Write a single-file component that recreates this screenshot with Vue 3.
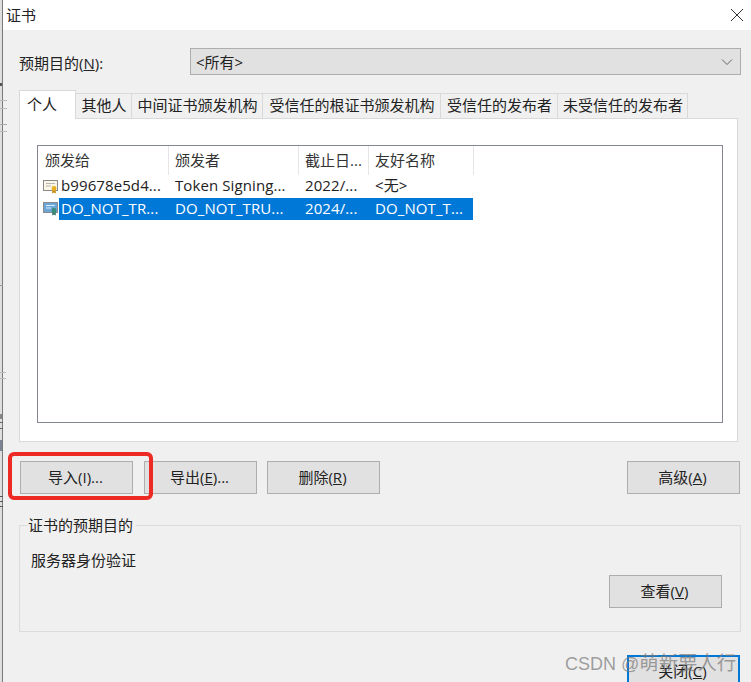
<script setup>
const tabs = ['个人', '其他人', '中间证书颁发机构', '受信任的根证书颁发机构', '受信任的发布者', '未受信任的发布者']
const tabWidths = [57, 56, 131, 178, 117, 130]
const cols = [
  { name: '颁发给', w: 131 },
  { name: '颁发者', w: 130 },
  { name: '截止日...', w: 70 },
  { name: '友好名称', w: 105 }
]
const rows = [
  { cells: ['b99678e5d4...', 'Token Signing...', '2022/...', '<无>'], selected: false },
  { cells: ['DO_NOT_TR...', 'DO_NOT_TRU...', '2024/...', 'DO_NOT_T...'], selected: true }
]
const marks = [
  { top: 83, h: 3, w: 2, c: '#555' },
  { top: 100, h: 1, w: 7, c: '#bbb' },
  { top: 108, h: 1, w: 7, c: '#bbb' },
  { top: 124, h: 1, w: 7, c: '#aaa' },
  { top: 131, h: 1, w: 7, c: '#bbb' },
  { top: 285, h: 1, w: 3, c: '#999' },
  { top: 372, h: 1, w: 6, c: '#bbb' },
  { top: 378, h: 1, w: 6, c: '#bbb' },
  { top: 414, h: 5, w: 2, c: '#888' },
  { top: 422, h: 1, w: 3, c: '#666' },
  { top: 428, h: 1, w: 3, c: '#666' },
  { top: 440, h: 11, w: 2, c: '#7a8494' },
  { top: 496, h: 1, w: 3, c: '#555' },
  { top: 501, h: 1, w: 3, c: '#555' },
  { top: 506, h: 1, w: 3, c: '#555' }
]
</script>

<template>
  <div class="root">
    <div class="edge"></div>
    <div class="win">
      <header class="title">
        <span>证书</span>
        <svg class="close-x" width="14" height="14" viewBox="0 0 14 14"><path d="M1 1l12 12M13 1L1 13" stroke="#333" stroke-width="1" fill="none" /></svg>
      </header>
      <main class="body">
        <div class="purpose">
          <label class="purpose-label">预期目的(<u>N</u>):</label>
          <div class="combo">
            <span>&lt;所有&gt;</span>
            <svg width="12" height="8" viewBox="0 0 12 8"><path d="M1 1.5l5 5 5-5" stroke="#666" stroke-width="1" fill="none" /></svg>
          </div>
        </div>

        <div class="tabs">
          <div v-for="(t, i) in tabs" :key="t" class="tab" :class="{ active: i === 0 }" :style="{ width: tabWidths[i] + 'px' }">{{ t }}</div>
        </div>
        <section class="panel">
          <div class="list">
            <div class="list-head">
              <div v-for="c in cols" :key="c.name" class="head-cell" :style="{ width: c.w + 'px' }">{{ c.name }}</div>
            </div>
            <div v-for="r in rows" :key="r.cells[0]" class="row">
              <svg class="cert" width="16" height="15" viewBox="0 0 16 15">
                <rect x="0.5" y="1.5" width="14" height="10" :fill="r.selected ? '#6aa7d8' : '#fbf6e6'" stroke="#8a8a8a" />
                <path d="M3 4.5h9M3 7h5" :stroke="r.selected ? '#dcecf8' : '#b5b5b5'" />
                <path d="M9.5 11l-.5 3.5 2-1 2 1-.5-3.5z" :fill="r.selected ? '#2f7a6a' : '#c98a12'" />
                <circle cx="11" cy="9.5" r="2.4" :fill="r.selected ? '#3c8f7c' : '#e8b020'" />
              </svg>
              <div class="cells" :class="{ selected: r.selected }">
                <div v-for="(v, i) in r.cells" :key="i" class="cell" :class="'c' + i">{{ v }}</div>
              </div>
            </div>
          </div>
        </section>

        <div class="actions">
          <button class="btn first">导入(I)...</button>
          <button class="btn second">导出(<u>E</u>)...</button>
          <button class="btn third">删除(<u>R</u>)</button>
          <button class="btn adv">高级(<u>A</u>)</button>
        </div>

        <fieldset class="group">
          <legend>证书的预期目的</legend>
          <div class="group-text">服务器身份验证</div>
          <div class="group-foot"><button class="btn">查看(<u>V</u>)</button></div>
        </fieldset>

        <div class="foot"><button class="btn default">关闭(<u>C</u>)</button></div>
      </main>
    </div>
    <i v-for="m in marks" :key="m.top" class="mark" :style="{ top: m.top + 'px', height: m.h + 'px', width: m.w + 'px', background: m.c }"></i>
    <div class="annot"></div>
    <div class="watermark">CSDN @<span class="wm-cjk">萌新要人行</span></div>
  </div>
</template>

<style>
html, body { margin: 0; padding: 0; background: #f0f0f0; }
</style>

<style scoped>
.root {
  position: relative;
  display: flex;
  width: 751px;
  height: 682px;
  overflow: hidden;
  font-family: "Open Sans", "Noto Sans CJK SC", sans-serif;
  font-size: 15px;
  color: #222;
}
.edge { width: 2px; background: #dedede; border-right: 1px solid #7a7a7a; flex: none; }
.mark { position: absolute; left: 0; display: block; }
.win { flex: 1; display: flex; flex-direction: column; min-width: 0; }
.title {
  height: 30px;
  flex: none;
  background: #fff;
  display: flex;
  align-items: center;
  justify-content: space-between;
  padding: 0 7px 0 3px;
  box-sizing: border-box;
  line-height: 30px;
}
.body {
  flex: 1;
  background: #f0f0f0;
  padding: 18px 10px 0 16px;
  min-height: 0;
}
.purpose { display: flex; align-items: center; height: 27px; }
.purpose-label { width: 171px; flex: none; position: relative; top: 1px; }
.combo {
  flex: 1;
  height: 27px;
  box-sizing: border-box;
  background: #e1e1e1;
  border: 1px solid #adadad;
  display: flex;
  align-items: center;
  justify-content: space-between;
  padding: 0 7px 0 5px;
}
.tabs { display: flex; align-items: flex-end; height: 28px; margin-top: 15px; position: relative; z-index: 1; }
.tab {
  height: 25px;
  box-sizing: border-box;
  flex: none;
  background: #f0f0f0;
  border: 1px solid #d9d9d9;
  border-left: 0;
  border-bottom: 0;
  padding-left: 1px;
  text-align: center;
  line-height: 23px;
  white-space: nowrap;
}
.tab.active {
  height: 29px;
  margin-bottom: -1px;
  background: #fff;
  border-left: 1px solid #d9d9d9;
  line-height: 26px;
  text-align: left;
  padding-left: 7px;
}
.panel {
  width: 719px;
  height: 324px;
  box-sizing: border-box;
  background: #fff;
  border: 1px solid #d9d9d9;
  padding: 26px 0 0 17px;
}
.list {
  width: 686px;
  height: 278px;
  box-sizing: border-box;
  border: 1px solid #828790;
  background: #fff;
}
.list-head { display: flex; height: 29px; }
.head-cell {
  flex: none;
  box-sizing: border-box;
  padding-left: 6px;
  line-height: 28px;
  border-right: 1px solid #e5e5e5;
  color: #333;
  white-space: nowrap;
}
.head-cell:first-child { padding-left: 7px; }
.row { display: flex; align-items: center; height: 22.5px; padding-left: 5px; }
.cert { flex: none; }
.cells { display: flex; height: 100%; align-items: center; line-height: 20px; }
.cell { flex: none; box-sizing: border-box; white-space: nowrap; overflow: hidden; letter-spacing: 0.1px; position: relative; top: -1px; }
.cells.selected { background: #0078d7; color: #fff; }
.c0 { width: 114px; padding-left: 2px; }
.c1 { width: 130px; padding-left: 2px; }
.c2 { width: 70px; padding-left: 2px; }
.c3 { width: 100px; padding-left: 2px; }
.actions { display: flex; height: 32px; margin-top: 19px; padding-left: 1px; width: 721px; box-sizing: border-box; }
.btn {
  width: 113px;
  height: 33px;
  box-sizing: border-box;
  flex: none;
  background: #e1e1e1;
  border: 1px solid #adadad;
  border-radius: 0;
  padding: 0 2px 3px 0;
  font: inherit;
  color: #222;
}
.second { margin-left: 11px; }
.third { margin-left: 10px; }
.adv { margin-left: auto; }
.group {
  width: 722px;
  height: 117px;
  box-sizing: border-box;
  margin: 22px 0 0;
  padding: 0 18px 0 11px;
  border: 1px solid #dcdcdc;
  min-width: 0;
}
.group legend { padding: 0 3px 0 0; margin-left: -3px; line-height: 21px; }
.group-text { margin-top: 13px; line-height: 22px; }
.group-foot { display: flex; justify-content: flex-end; margin-top: 4px; }
.foot { display: flex; justify-content: flex-end; margin-top: 23px; width: 721px; }
.default { border: 2px solid #0078d7; }
.annot {
  position: absolute;
  left: 8px;
  top: 452px;
  width: 145px;
  height: 48px;
  box-sizing: border-box;
  border: 4px solid #ee2a24;
  border-radius: 6px;
}
.watermark {
  position: absolute;
  left: 565px;
  top: 650px;
  font-family: "Liberation Sans", "Noto Sans CJK SC", sans-serif;
  font-size: 18px;
  line-height: 26px;
  color: rgba(120, 120, 120, 0.7);
  white-space: nowrap;
}
.wm-cjk { font-size: 19.4px; }
</style>
